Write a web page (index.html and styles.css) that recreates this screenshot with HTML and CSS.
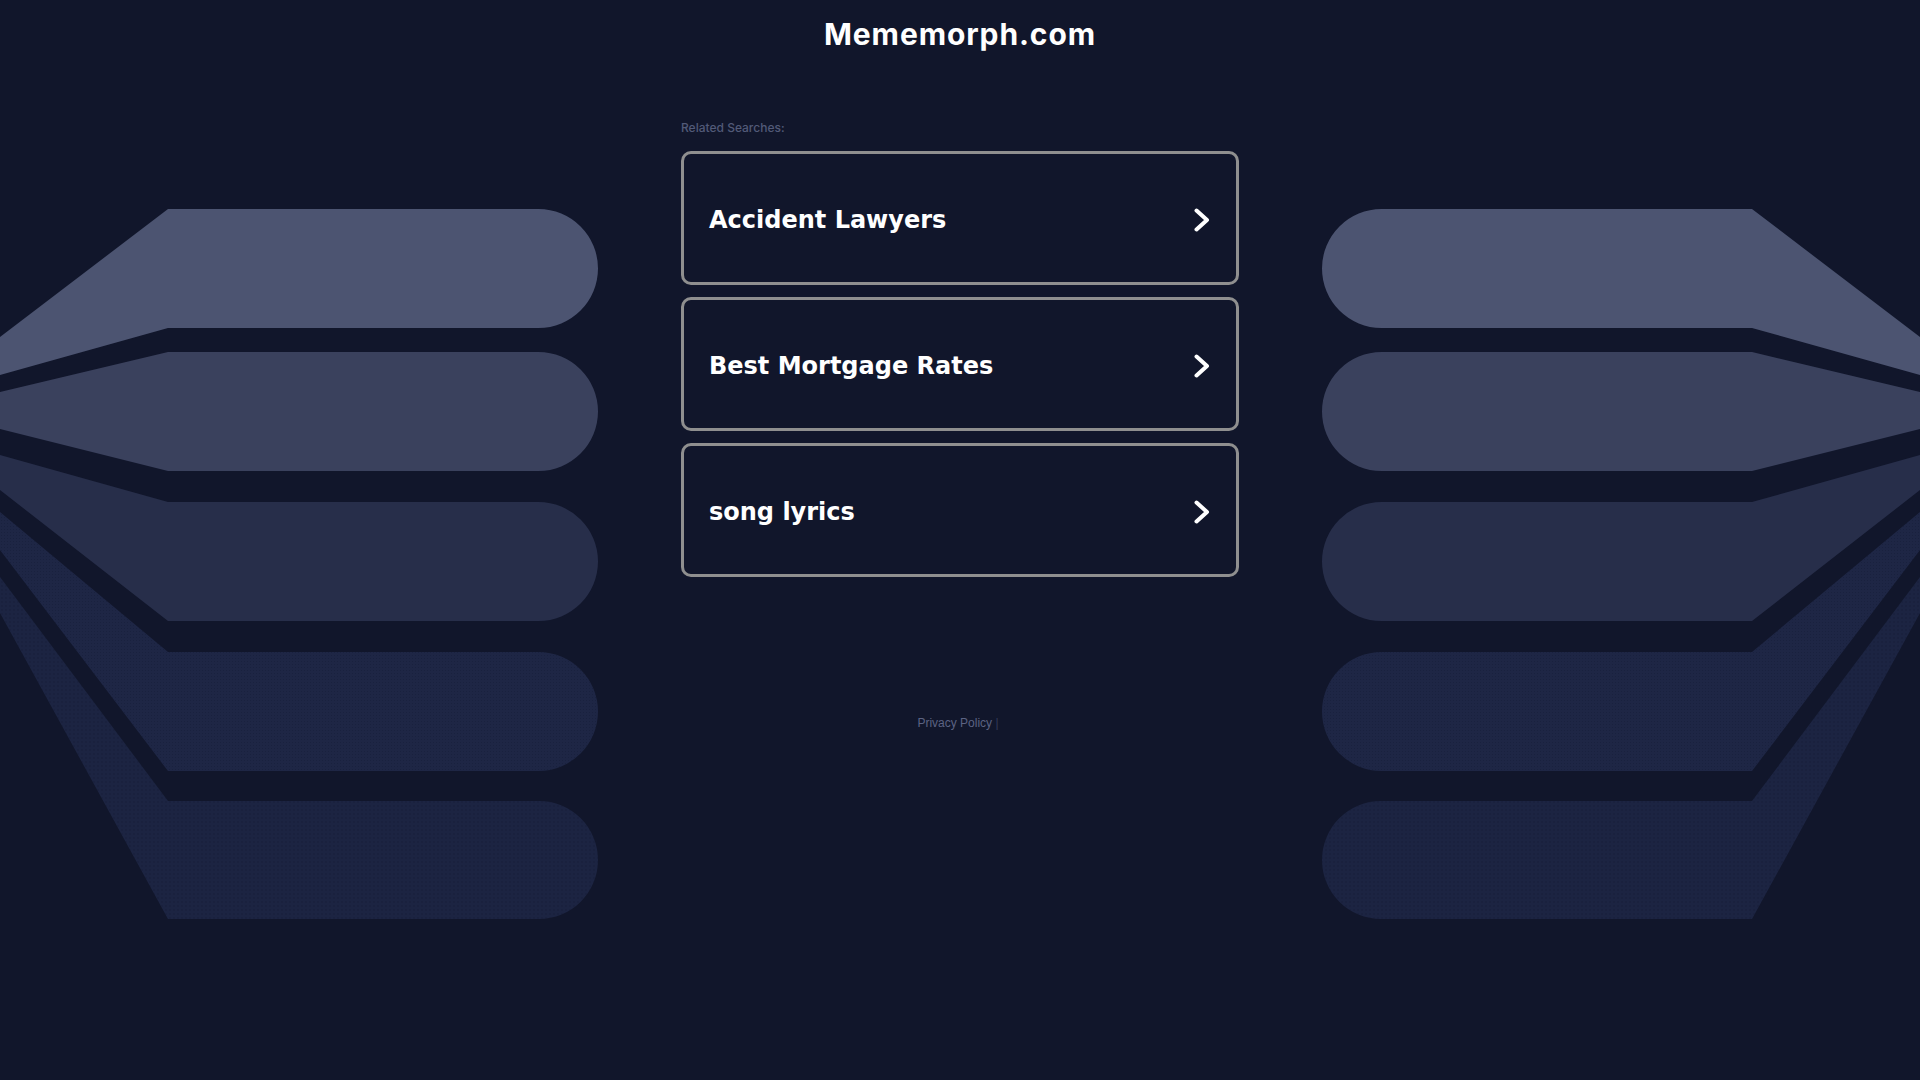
FILE: index.html
```html
<!DOCTYPE html>
<html lang="en">
<head>
<meta charset="utf-8">
<title>Mememorph.com</title>
<link rel="stylesheet" href="styles.css">
</head>
<body>
<div class="page">
  <svg class="art art-left" viewBox="0 0 598 1080" width="598" height="1080" aria-hidden="true">
    <defs>
      <pattern id="dotsA" width="3" height="3" patternUnits="userSpaceOnUse">
        <rect width="3" height="3" fill="#1e2645"/>
        <circle cx="1.5" cy="1.5" r="0.55" fill="#18203d"/>
      </pattern>
      <pattern id="dotsB" width="4" height="4" patternUnits="userSpaceOnUse">
        <rect width="4" height="4" fill="#1c2442"/>
        <circle cx="2" cy="2" r="0.7" fill="#141b36"/>
      </pattern>
    </defs>
    <path fill="#4c5471" d="M0,337 L168,209 H538.5 A59.5,59.5 0 0 1 538.5,328 H168 L0,375 Z"/>
    <path fill="#3a415d" d="M0,392 L168,352 H538.5 A59.5,59.5 0 0 1 538.5,471 H168 L0,429 Z"/>
    <path fill="#272e4a" d="M0,455 L168,502 H538.5 A59.5,59.5 0 0 1 538.5,621 H168 L0,490 Z"/>
    <path fill="url(#dotsA)" d="M0,512 L168,652 H538.5 A59.5,59.5 0 0 1 538.5,771 H168 L0,550 Z"/>
    <path fill="url(#dotsB)" d="M0,577 L168,801 H539 A59,59 0 0 1 539,919 H168 L0,613 Z"/>
  </svg>

  <main class="center">
    <h1 class="site-title">Mememorph.com</h1>
    <p class="related">Related Searches:</p>
    <div class="links">
      <a class="link-box" href="#">
        <span class="link-text">Accident Lawyers</span>
        <svg class="chev" viewBox="0 0 16 24" width="16" height="24" aria-hidden="true"><polyline points="2.5,2.5 13,12 2.5,21.5"/></svg>
      </a>
      <a class="link-box" href="#">
        <span class="link-text">Best Mortgage Rates</span>
        <svg class="chev" viewBox="0 0 16 24" width="16" height="24" aria-hidden="true"><polyline points="2.5,2.5 13,12 2.5,21.5"/></svg>
      </a>
      <a class="link-box" href="#">
        <span class="link-text">song lyrics</span>
        <svg class="chev" viewBox="0 0 16 24" width="16" height="24" aria-hidden="true"><polyline points="2.5,2.5 13,12 2.5,21.5"/></svg>
      </a>
    </div>
    <footer class="footer">
      <a class="privacy" href="#">Privacy Policy</a> <span class="pipe">|</span>
    </footer>
  </main>

  <svg class="art art-right" viewBox="0 0 598 1080" width="598" height="1080" aria-hidden="true">
    <path fill="#4c5471" d="M0,337 L168,209 H538.5 A59.5,59.5 0 0 1 538.5,328 H168 L0,375 Z"/>
    <path fill="#3a415d" d="M0,392 L168,352 H538.5 A59.5,59.5 0 0 1 538.5,471 H168 L0,429 Z"/>
    <path fill="#272e4a" d="M0,455 L168,502 H538.5 A59.5,59.5 0 0 1 538.5,621 H168 L0,490 Z"/>
    <path fill="url(#dotsA)" d="M0,512 L168,652 H538.5 A59.5,59.5 0 0 1 538.5,771 H168 L0,550 Z"/>
    <path fill="url(#dotsB)" d="M0,577 L168,801 H539 A59,59 0 0 1 539,919 H168 L0,613 Z"/>
  </svg>
</div>
</body>
</html>
```

FILE: styles.css
```css
html, body {
  margin: 0;
  padding: 0;
  height: 100%;
}

body {
  background: #11162b;
  color: #ffffff;
  font-family: "Inter", "Liberation Sans", sans-serif;
  overflow: hidden;
}

.page {
  display: grid;
  grid-template-columns: 598px 1fr 598px;
  height: 1080px;
}

.art {
  display: block;
  width: 598px;
  height: 1080px;
}

.art-right {
  transform: scaleX(-1);
}

.center {
  display: flex;
  flex-direction: column;
  align-items: center;
}

.site-title {
  margin: 0;
  padding-top: 19px;
  font-family: "Inter", "Liberation Sans", sans-serif;
  font-weight: 700;
  font-size: 30px;
  line-height: 30px;
  letter-spacing: 0.9px;
  color: #ffffff;
}

.related {
  width: 558px;
  margin: 72px 0 0;
  font-family: "Inter", "Liberation Sans", sans-serif;
  font-size: 12px;
  font-weight: 500;
  line-height: 14px;
  color: #525a78;
}

.links {
  display: flex;
  flex-direction: column;
  gap: 12px;
  margin-top: 16px;
}

.link-box {
  box-sizing: border-box;
  width: 558px;
  height: 134px;
  display: flex;
  align-items: center;
  justify-content: space-between;
  padding: 3px 26px 0 25px;
  border: 3px solid #8f8f8f;
  border-radius: 10px;
  background: #11162b;
  text-decoration: none;
  color: #ffffff;
}

.link-text {
  font-family: "DejaVu Sans", Verdana, sans-serif;
  font-weight: 700;
  font-size: 24px;
  line-height: 28px;
  color: #ffffff;
}

.chev {
  display: block;
  flex: none;
}

.chev polyline {
  fill: none;
  stroke: #ffffff;
  stroke-width: 4;
  stroke-linecap: round;
  stroke-linejoin: round;
}

.footer {
  margin-top: 139px;
  font-family: "Liberation Sans", Arial, sans-serif;
  font-size: 12px;
  line-height: 14px;
  color: #5c6383;
  padding-right: 4px;
}

.privacy {
  color: #5c6383;
  text-decoration: none;
}

.pipe {
  color: #343a58;
}
```
